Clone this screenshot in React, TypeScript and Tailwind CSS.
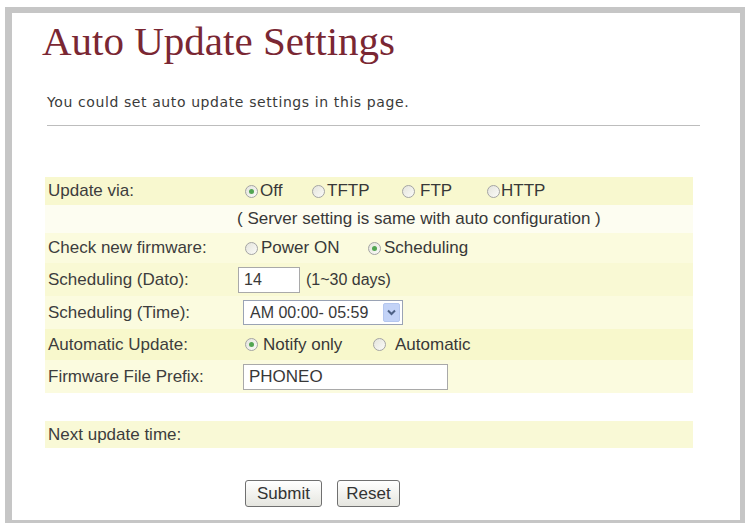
import React from "react";

function Radio({ checked }: { checked?: boolean }) {
  return (
    <span className="inline-flex items-center justify-center w-[13px] h-[13px] rounded-full border border-[#a4a4a4] bg-gradient-to-br from-[#e4e4dc] to-[#fbfbf8] shrink-0">
      {checked ? <span className="w-[5px] h-[5px] rounded-full bg-[#52a552]" /> : null}
    </span>
  );
}

function Opt({
  checked,
  label,
  w,
  gap,
}: {
  checked?: boolean;
  label: string;
  w?: string;
  gap: string;
}) {
  return (
    <span className={`inline-flex items-center ${gap} ${w ?? ""}`}>
      <Radio checked={checked} />
      <span>{label}</span>
    </span>
  );
}

function Row({
  label,
  bg,
  h,
  children,
}: {
  label: string;
  bg: string;
  h: string;
  children?: React.ReactNode;
}) {
  return (
    <div className={`grid grid-cols-[192px_1fr] items-center ${bg} ${h}`}>
      <div className="pl-[3px] text-[#3d3d3d] whitespace-nowrap">{label}</div>
      <div className="flex items-center text-[#383838]">{children}</div>
    </div>
  );
}

export default function App() {
  return (
    <div className="w-[745px] h-[523px] bg-white pl-[5px] pt-[7px] overflow-hidden">
      <div className="w-[740px] h-[516px] border-t-[6px] border-l-[7px] border-r-[5px] border-b-[3px] border-[#c6c6c6] bg-white font-['Liberation_Sans',Arial,sans-serif] text-[17px]">
        <h1 className="mt-[8px] pl-[30px] font-['Liberation_Serif','Times_New_Roman',serif] text-[41px] leading-[41px] text-[#7a2733] whitespace-nowrap">
          Auto Update Settings
        </h1>
        <p className="mt-[32px] pl-[35px] font-['DejaVu_Sans',Verdana,sans-serif] text-[14px] tracking-[0.6px] leading-[16px] text-[#3a3a3a] whitespace-nowrap">
          You could set auto update settings in this page.
        </p>
        <div className="mt-[15px] ml-[35px] w-[653px] h-[1px] bg-[#bdbdbd]" />

        <div className="mt-[51px] ml-[33px] w-[648px] leading-[20px]">
          <Row label="Update via:" bg="bg-[#f8f8cf]" h="h-[28px]">
            <span className="pl-[8px] flex items-center">
              <Opt checked label="Off" w="w-[67px]" gap="gap-[2px]" />
              <Opt label="TFTP" w="w-[90px]" gap="gap-[2px]" />
              <Opt label="FTP" w="w-[85px]" gap="gap-[5px]" />
              <Opt label="HTTP" gap="gap-[1px]" />
            </span>
          </Row>
          <Row label="" bg="bg-[#fdfdf1]" h="h-[28px]">
            <span className="whitespace-nowrap">( Server setting is same with auto configuration )</span>
          </Row>
          <Row label="Check new firmware:" bg="bg-[#fbfbde]" h="h-[30px]">
            <span className="pl-[8px] flex items-center">
              <Opt label="Power ON" w="w-[123px]" gap="gap-[3px]" />
              <Opt checked label="Scheduling" gap="gap-[3px]" />
            </span>
          </Row>
          <Row label="Scheduling (Dato):" bg="bg-[#f9f9d4]" h="h-[33px]">
            <span className="pl-[1px] flex items-center">
              <span className="w-[62px] h-[26px] border border-[#a9a9a9] bg-white pl-[5px] flex items-center text-[16px]">
                14
              </span>
              <span className="ml-[6px] text-[16px]">(1~30 days)</span>
            </span>
          </Row>
          <Row label="Scheduling (Time):" bg="bg-[#fbfbdf]" h="h-[33px]">
            <span className="pl-[6px] flex items-center">
              <span className="w-[160px] h-[25px] border border-[#9aa3b5] bg-white flex items-center justify-between pl-[6px] pr-[2px] text-[16px]">
                <span>AM 00:00- 05:59</span>
                <span className="w-[17px] h-[19px] rounded-[2px] bg-[#c3d3f7] border border-[#b5c7ef] flex items-center justify-center">
                  <svg width="9" height="7" viewBox="0 0 9 7">
                    <path d="M1 1.5 L4.5 5 L8 1.5" fill="none" stroke="#4d6185" strokeWidth="2" />
                  </svg>
                </span>
              </span>
            </span>
          </Row>
          <Row label="Automatic Update:" bg="bg-[#f8f8cc]" h="h-[31px]">
            <span className="pl-[8px] flex items-center">
              <Opt checked label="Notify only" w="w-[128px]" gap="gap-[5px]" />
              <Opt label="Automatic" gap="gap-[9px]" />
            </span>
          </Row>
          <Row label="Firmware File Prefix:" bg="bg-[#fbfbdf]" h="h-[33px]">
            <span className="pl-[6px] flex items-center">
              <span className="w-[205px] h-[26px] border border-[#a9a9a9] bg-white pl-[5px] flex items-center">
                PHONEO
              </span>
            </span>
          </Row>
          <div className="h-[28px]" />
          <Row label="Next update time:" bg="bg-[#f9f9d6]" h="h-[27px]" />
          <div className="mt-[32px] pl-[200px] flex gap-[15px]">
            <button className="w-[77px] h-[27px] rounded-[3px] border border-[#707070] bg-gradient-to-b from-[#ffffff] to-[#e6e6e0] text-[#333] text-[17px] leading-none">
              Submit
            </button>
            <button className="w-[63px] h-[27px] rounded-[3px] border border-[#707070] bg-gradient-to-b from-[#ffffff] to-[#e6e6e0] text-[#333] text-[17px] leading-none">
              Reset
            </button>
          </div>
        </div>
      </div>
    </div>
  );
}
